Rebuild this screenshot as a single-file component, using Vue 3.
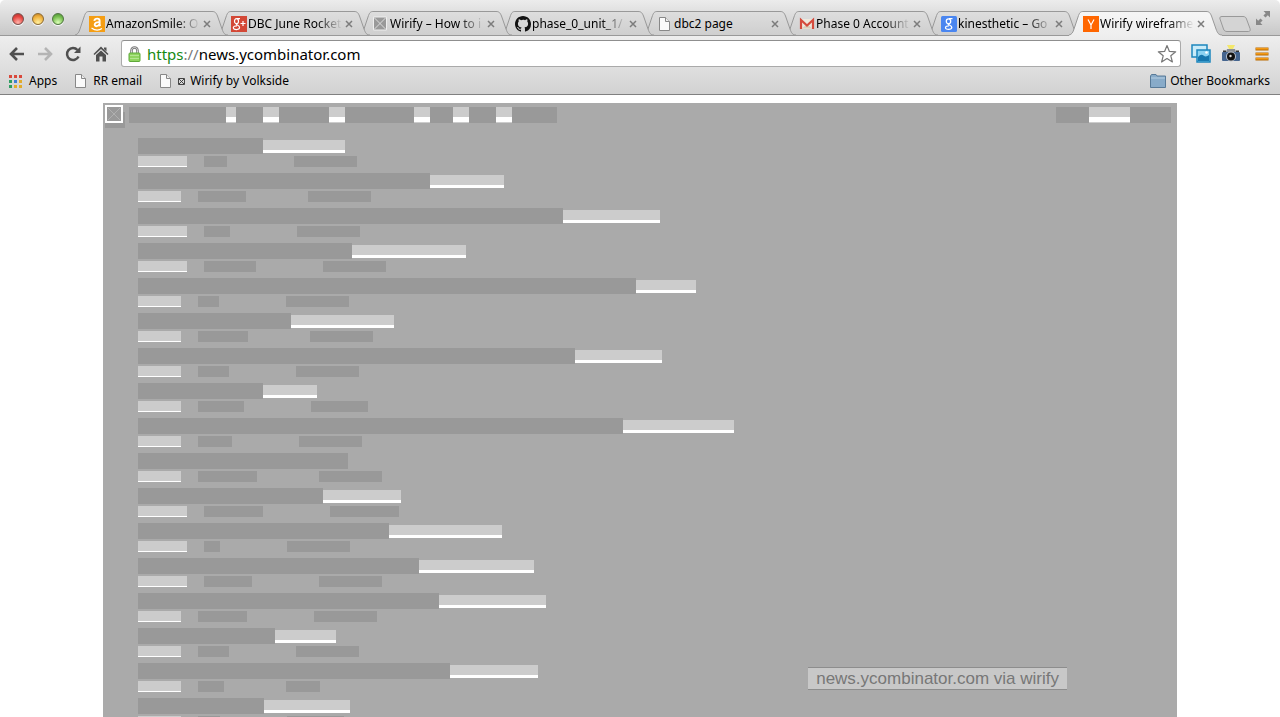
<script setup>
import { ref } from 'vue'

const address = ref('https://news.ycombinator.com')

const tabs = [
  { icon: 'amazon', title: 'AmazonSmile: O' },
  { icon: 'gplus', title: 'DBC June Rocket' },
  { icon: 'wirify', title: 'Wirify – How to i' },
  { icon: 'github', title: 'phase_0_unit_1/' },
  { icon: 'page', title: 'dbc2 page', whole: true },
  { icon: 'gmail', title: 'Phase 0 Account' },
  { icon: 'google', title: 'kinesthetic – Go' },
  { icon: 'yc', title: 'Wirify wireframe', active: true },
]

const appColors = ['#d9483b', '#d9483b', '#d9483b', '#2f9e62', '#3f7fd6', '#e2ab2b', '#2f9e62', '#e2ab2b', '#e2ab2b']

// Alternating text and link widths of the top menu
const menu = [97, 10, 27, 16, 50, 16, 69, 16, 23, 16, 27, 16, 45]
const account = [33, 41, 41]

// title, site, points, gap, age, gap, comments
const stories = [
  [125, 82, 49, 17, 23, 67, 63],
  [292, 74, 43, 17, 48, 62, 63],
  [425, 97, 49, 17, 26, 67, 63],
  [214, 114, 49, 17, 52, 67, 63],
  [498, 60, 43, 17, 21, 67, 63],
  [153, 103, 43, 17, 50, 62, 63],
  [437, 87, 43, 17, 31, 67, 63],
  [125, 54, 43, 17, 46, 67, 57],
  [485, 111, 43, 17, 34, 67, 63],
  [210, 0, 43, 17, 59, 62, 63],
  [185, 78, 49, 17, 59, 67, 69],
  [251, 113, 49, 17, 16, 67, 63],
  [281, 115, 49, 17, 48, 67, 63],
  [301, 107, 43, 17, 49, 67, 63],
  [137, 61, 43, 17, 31, 67, 63],
  [312, 88, 43, 17, 26, 62, 34],
  [126, 86, 43, 17, 22, 67, 57],
]

const px = (n) => ({ width: n + 'px' })
</script>

<template>
  <div class="browser">
    <header class="frame">
      <div class="strip">
        <div class="lights">
          <button class="light red" aria-label="Close window"></button>
          <button class="light amber" aria-label="Minimise window"></button>
          <button class="light green" aria-label="Zoom window"></button>
        </div>
        <nav class="tabs">
          <div v-for="(tab, i) in tabs" :key="i" class="tab" :class="{ active: tab.active }" :style="{ zIndex: tab.active ? 20 : 10 - i }">
            <svg class="shape" width="153" height="25" viewBox="0 0 153 25" aria-hidden="true">
              <defs>
                <linearGradient :id="'fill' + i" x1="0" y1="0" x2="0" y2="1">
                  <stop offset="0" :stop-color="tab.active ? '#f6f6f6' : '#dedede'" />
                  <stop offset="1" :stop-color="tab.active ? '#eeeeee' : '#cecece'" />
                </linearGradient>
              </defs>
              <path d="M0 24C3 23.500 4 21 5 18L9 6C10.500 1.500 11.500 .5 14 .5H137C140 .5 141 1.500 142.500 5L147 18C148.500 22 149.500 24 153 24V25H0Z" :fill="`url(#fill${i})`" />
              <path v-if="!tab.active" d="M0 24.500H153" stroke="#999" />
              <path d="M0 24C3 23.500 4 21 5 18L9 6C10.500 1.500 11.500 .5 14 .5H137C140 .5 141 1.500 142.500 5L147 18C148.500 22 149.500 24 153 24" fill="none" stroke="#999" />
            </svg>
            <a href="#" class="tablink">
              <svg v-if="tab.icon === 'amazon'" class="ico" viewBox="0 0 16 16">
                <rect width="16" height="16" fill="#f59e14" />
                <path d="M5.300 4.800C5.600 3 7 2.600 8.300 2.600 10 2.600 10.600 3.400 10.600 4.800V8.200C10.600 9.200 10.900 9.500 11.400 10M10.500 6.200C8 6 5.700 6.600 5.700 8.500 5.700 11 9.500 10.600 10.500 8" fill="none" stroke="#fff" stroke-width="1.900" />
                <path d="M2.500 12C6 14.500 10 14.500 13 12.500" fill="none" stroke="#fff" stroke-width="1.200" />
              </svg>
              <svg v-else-if="tab.icon === 'gplus'" class="ico" viewBox="0 0 16 16">
                <rect width="16" height="16" fill="#d34836" />
                <g fill="none" stroke="#fff" stroke-width="1.200">
                  <ellipse cx="5.500" cy="5.200" rx="2" ry="2.500" />
                  <path d="M6 2.600H9M6 7.700C3.500 8.500 8.800 9.300 8.600 11.600 8.500 14.200 2.300 14.200 2.300 11.800 2.300 10.500 4 9.700 6 9.800M9.500 7.500H14.500M12 5V10" />
                </g>
              </svg>
              <svg v-else-if="tab.icon === 'wirify'" class="ico" viewBox="0 0 16 16">
                <path d="M.5 1H13.500V14H.5Z" fill="#999" stroke="#eee" />
                <path d="M1 1.500 13 13.500M13 1.500 1 13.500" stroke="#ddd" />
              </svg>
              <svg v-else-if="tab.icon === 'github'" class="ico" viewBox="0 0 16 16">
                <path fill="#111" d="M8 0C3.580 0 0 3.580 0 8c0 3.540 2.290 6.530 5.470 7.590.4.070.55-.17.55-.38 0-.19-.01-.82-.01-1.490-2.010.37-2.530-.49-2.690-.94-.09-.23-.48-.94-.82-1.130-.28-.15-.68-.52-.01-.53.63-.01 1.080.58 1.230.82.72 1.210 1.870.87 2.330.66.07-.52.28-.87.51-1.070-1.780-.2-3.640-.89-3.640-3.950 0-.87.31-1.590.82-2.150-.08-.2-.36-1.020.08-2.120 0 0 .67-.21 2.200.82A7.600 7.600 0 0 1 8 3.860c.68 0 1.360.09 2 .27 1.530-1.040 2.200-.82 2.200-.82.44 1.100.16 1.920.08 2.120.51.56.82 1.270.82 2.150 0 3.070-1.870 3.750-3.650 3.950.29.25.54.73.54 1.480 0 1.070-.01 1.930-.01 2.200 0 .21.15.46.55.38A8 8 0 0 0 16 8c0-4.420-3.580-8-8-8Z" />
              </svg>
              <svg v-else-if="tab.icon === 'page'" class="ico" viewBox="0 0 16 16">
                <path d="M2.500 1.500H8.500L12.500 5.500V14.500H2.500Z" fill="#fafafa" stroke="#888" /><path d="M8.500 1.500V5.500H12.500" fill="#eee" stroke="#888" />
              </svg>
              <svg v-else-if="tab.icon === 'gmail'" class="ico" viewBox="0 0 16 16">
                <rect x="2" y="3" width="12" height="10" fill="#eee8dd" />
                <path d="M3 12.500 8 8 13 12.500" fill="#d8cdbb" />
                <path d="M2 13V4L8 9.500 14 4V13" fill="none" stroke="#d54b3d" stroke-width="2.200" />
              </svg>
              <svg v-else-if="tab.icon === 'google'" class="ico" viewBox="0 0 16 16">
                <rect width="16" height="16" rx="1.500" fill="#4a86f0" />
                <g fill="none" stroke="#fff" stroke-width="1.300">
                  <ellipse cx="7.500" cy="5.300" rx="2.200" ry="2.500" />
                  <path d="M8 2.700H11.500M8 7.800C5.500 8.500 11 9.300 10.800 11.500 10.600 14 4.500 14 4.500 11.700 4.500 10.400 6.200 9.800 8 9.900" />
                </g>
              </svg>
              <svg v-else class="ico" viewBox="0 0 16 16">
                <rect width="16" height="16" fill="#ff6600" />
                <path d="M5 3.500 8 9 11 3.500M8 8.500V13" fill="none" stroke="#fff" stroke-width="1.200" />
              </svg>
              <span class="title" :class="{ whole: tab.whole }">{{ tab.title }}</span>
            </a>
            <button class="close" aria-label="Close tab">
              <svg width="8" height="8" viewBox="0 0 8 8"><path d="M1 1 7 7M7 1 1 7" stroke="#7c7c7c" stroke-width="1.500" /></svg>
            </button>
          </div>
        </nav>
        <button class="newtab" aria-label="New tab">
          <svg width="32" height="16" viewBox="0 0 32 16"><path d="M3 .5H24C26 .5 27 1.500 27.500 3L31 12.500C31.500 14.500 31 15.500 29.500 15.500H8C6 15.500 5 14.500 4.500 13L1 3C.5 1.500 1 .5 3 .5Z" fill="#d4d4d4" stroke="#999" /></svg>
        </button>
        <button class="expand" aria-label="Full screen">
          <svg width="16" height="16" viewBox="0 0 16 16" fill="#888"><path d="M8.500 1H15V7.500L12.800 5.300 10.500 7.600 8.400 5.500 10.700 3.200ZM7.500 15H1V8.500L3.200 10.700 5.500 8.400 7.600 10.500 5.300 12.800Z" /></svg>
        </button>
      </div>
    </header>

    <div class="chrome">
      <div class="toolbar">
        <button class="nav" aria-label="Back"><svg width="16" height="16" viewBox="0 0 16 16"><path d="M8 2 2 8 8 14M2 8H15" fill="none" stroke="#505050" stroke-width="2.600" /></svg></button>
        <button class="nav" aria-label="Forward"><svg width="16" height="16" viewBox="0 0 16 16"><path d="M8 2 14 8 8 14M14 8H1" fill="none" stroke="#b4b4b4" stroke-width="2.600" /></svg></button>
        <button class="nav" aria-label="Reload"><svg width="16" height="16" viewBox="0 0 16 16"><path d="M12.500 4A6 6 0 1 0 13.500 10.500" fill="none" stroke="#505050" stroke-width="2.500" /><path d="M15.500 .5V7H9Z" fill="#505050" /></svg></button>
        <button class="nav" aria-label="Home"><svg width="16" height="16" viewBox="0 0 16 16" fill="#505050"><path d="M8 .5 15.500 8 14.500 9 8 3 1.500 9 .5 8ZM11 1.500H13.500V5.500L11 3ZM3 9 8 4.500 13 9V15.500H9.500V10.500H6.500V15.500H3Z" /></svg></button>
        <div class="omnibox">
          <svg class="lock" width="13" height="16" viewBox="0 0 13 16">
            <path d="M3.500 8V4.500C3.500 .5 9.500 .5 9.500 4.500V8" fill="none" stroke="#777" stroke-width="2.600" /><path d="M3.500 8V4.500C3.500 .5 9.500 .5 9.500 4.500V8" fill="none" stroke="#ddd" />
            <rect x="1" y="7" width="11" height="8.500" rx="1" fill="#8fd45f" stroke="#5fa83a" /><path d="M2 9.500H11M2 12.500H11" stroke="#b3e590" />
          </svg>
          <div class="field">
            <span class="urltext" aria-hidden="true"><span class="scheme">https</span><span class="slashes">://</span>news.ycombinator.com</span>
            <input v-model="address" class="url" aria-label="Address" spellcheck="false" />
          </div>
          <button class="star" aria-label="Bookmark this page"><svg width="20" height="20" viewBox="0 0 20 20"><path d="M10 1.500 12.400 7.400 18.700 7.800 13.800 11.800 15.400 18 10 14.600 4.600 18 6.200 11.800 1.300 7.800 7.600 7.400Z" fill="#fff" stroke="#777" stroke-width="1.200" stroke-linejoin="round" /></svg></button>
        </div>
        <button class="ext" aria-label="Image viewer"><svg width="20" height="20" viewBox="0 0 20 20">
          <rect x="1" y="1" width="15" height="12" fill="#c9ebf8" stroke="#1c86bd" stroke-width="1.500" />
          <rect x="6" y="6" width="13" height="12" fill="#8bd2f1" stroke="#1c86bd" stroke-width="1.500" />
          <path d="M7 13Q10 9.500 12.500 11.500T18 11V17H7Z" fill="#1677ae" /><circle cx="15.500" cy="8.500" r="1.300" fill="#fff" />
        </svg></button>
        <button class="ext" aria-label="Screen capture"><svg width="20" height="20" viewBox="0 0 20 20">
          <path d="M6 1H14L12 5H8Z" fill="#f4e86c" /><path d="M6 5H14L15 8H5Z" fill="#888d96" />
          <rect x="1" y="8" width="18" height="9" rx="1" fill="#45658f" /><path d="M2 8V6.500H5V8M15 8V6.500H18V8" fill="#333" />
          <circle cx="10" cy="12.500" r="5" fill="#b9bfc8" /><circle cx="10" cy="12.500" r="4" fill="#111" /><circle cx="9.500" cy="12" r="1.200" fill="#ddd" />
        </svg></button>
        <button class="ext menu" aria-label="Menu"><svg width="14" height="14" viewBox="0 0 14 14"><path d="M.5 2H13.500M.5 7H13.500M.5 12H13.500" stroke="#b96a00" stroke-width="3" /><path d="M1 1.700H13M1 6.700H13M1 11.700H13" stroke="#f39a16" stroke-width="1.400" /></svg></button>
      </div>

      <nav class="bookmarks">
        <a href="#" class="mark apps"><svg width="13" height="13" viewBox="0 0 13 13"><rect v-for="(c, i) in appColors" :key="i" :x="(i % 3) * 5" :y="Math.floor(i / 3) * 5" width="3" height="3" :fill="c" /></svg>Apps</a>
        <a href="#" class="mark"><svg width="11" height="14" viewBox="0 0 11 14"><path d="M.5 .5H6.500L10.500 4.500V13.500H.5Z" fill="#fafafa" stroke="#888" /><path d="M6.500 .5V4.500H10.500" fill="#eee" stroke="#888" /></svg>RR email</a>
        <a href="#" class="mark"><svg width="11" height="14" viewBox="0 0 11 14"><path d="M.5 .5H6.500L10.500 4.500V13.500H.5Z" fill="#fafafa" stroke="#888" /><path d="M6.500 .5V4.500H10.500" fill="#eee" stroke="#888" /></svg><svg class="box" width="7" height="7" viewBox="0 0 7 7"><path d="M.5 .5H6.500V6.500H.5ZM1 1 6 6M6 1 1 6" fill="none" stroke="#333" stroke-width=".9" /></svg>Wirify by Volkside</a>
        <a href="#" class="mark other"><svg width="16" height="14" viewBox="0 0 16 14"><path d="M.5 13.500V2L1.500 .5H6L7 2H15.500V13.500Z" fill="#88abc9" stroke="#587a98" /><path d="M1 4H15" stroke="#b7cfe3" /></svg>Other Bookmarks</a>
      </nav>
    </div>

    <main class="page">
      <div class="wire">
        <div class="masthead">
          <div class="logo"><svg width="18" height="18" viewBox="0 0 18 18"><rect x="1" y="1" width="16" height="16" fill="#999" stroke="#fff" stroke-width="2" /><path d="M3 3 15 15M15 3 3 15" stroke="#b0b0b0" /></svg></div>
          <div class="cells"><span v-for="(w, i) in menu" :key="i" :class="i % 2 ? 'hot' : 'cold'" :style="px(w)"></span></div>
          <div class="cells right"><span v-for="(w, i) in account" :key="i" :class="i % 2 ? 'hot' : 'cold'" :style="px(w)"></span></div>
        </div>
        <ul class="stories">
          <li v-for="(s, i) in stories" :key="i">
            <div class="line"><span class="headline" :style="px(s[0])"></span><span class="site" :style="px(s[1])"></span></div>
            <div class="line sub">
              <span class="points" :style="px(s[2])"></span><span :style="px(s[3])"></span><span class="meta" :style="px(s[4])"></span><span :style="px(s[5])"></span><span class="meta" :style="px(s[6])"></span>
            </div>
          </li>
        </ul>
      </div>
      <a href="#" class="credit">news.ycombinator.com via wirify</a>
    </main>
  </div>
</template>

<style>
body { background: #fff; }
</style>

<style scoped>
* { box-sizing: border-box; }
button { border: 0; padding: 0; background: none; display: flex; align-items: center; justify-content: center; flex: none; }
svg { display: block; flex: none; }
a { color: inherit; text-decoration: none; }
.browser { height: 100vh; display: flex; flex-direction: column; overflow: hidden; font-family: "Noto Sans", "Open Sans", sans-serif; font-size: 12px; color: #000; }
.frame { flex: none; background: linear-gradient(#ececec, #c8c8c8 35px, #999 35px); border-radius: 5px 5px 0 0; }
.strip { display: flex; height: 36px; align-items: flex-end; }
.lights { display: flex; gap: 8px; padding: 0 11px 11px 12px; }
.light { width: 12px; height: 12px; border-radius: 50%; border: 1px solid #76504c; box-shadow: 0 1px 1px #fff; }
.red { background: radial-gradient(circle at 50% 85%, #ffb4ac, #e64540 60%, #a93632); }
.amber { background: radial-gradient(circle at 50% 85%, #fff0a0, #efb13c 60%, #b97925); border-color: #8a6a34; }
.green { background: radial-gradient(circle at 50% 85%, #dcffb8, #75bd4e 60%, #4b8a34); border-color: #4f7440; }
.tabs { display: flex; position: relative; z-index: 1; }
.tab { position: relative; flex: 0 0 142px; height: 25px; display: flex; align-items: center; padding-left: 14px; }
.shape { position: absolute; left: 0; top: 0; }
.tablink { position: relative; display: flex; align-items: center; gap: 1px; width: 113px; }
.ico { width: 16px; height: 16px; }
.title { flex: 1; overflow: hidden; white-space: nowrap; line-height: 16px; mask-image: linear-gradient(to right, #000 72%, transparent 98%); }
.title.whole { mask-image: none; }
.close { position: relative; margin-left: 1px; width: 8px; height: 16px; }
.newtab { margin: 0 0 4px 8px; }
.expand { margin: 0 9px 10px auto; }
.chrome { flex: none; background: linear-gradient(#eeeeee, #d2d2d2); border-bottom: 1px solid #808080; padding: 4px 10px 4px 9px; }
.toolbar { display: flex; align-items: center; height: 27px; }
.nav { width: 16px; margin-right: 12px; height: 24px; }
.omnibox { flex: 1; display: flex; align-items: center; height: 27px; background: #fff; border: 1px solid #aaa; border-top-color: #8f8f8f; border-radius: 3px; padding: 0 3px 0 6px; margin-right: 10px; }
.field { flex: 1; display: grid; margin-left: 6px; font-size: 15px; line-height: 24px; }
.urltext, .url { grid-area: 1 / 1; }
.urltext { pointer-events: none; }
.scheme { color: #168a12; }
.slashes { color: #777; }
.url { border: 0; outline: 0; padding: 0; width: 100%; background: none; font: inherit; color: transparent; caret-color: #000; }
.ext { width: 20px; margin-right: 10px; }
.menu { width: 14px; margin: 0 1px 0 4px; }
.bookmarks { display: flex; align-items: center; height: 23px; padding-top: 5px; }
.mark { display: flex; align-items: center; gap: 7px; margin-right: 18px; line-height: 16px; }
.box { margin-right: -2px; }
.other { margin: 0 0 0 auto; gap: 4px; }
.page { flex: 1; min-height: 0; overflow: hidden; background: #fff; padding: 8px; position: relative; }
.wire { width: 85%; margin: 0 auto; min-height: 100%; background: #aaa; }
.masthead { display: flex; padding: 2px 6px 0 2px; height: 35px; align-items: flex-start; }
.logo { width: 20px; height: 23px; background: linear-gradient(transparent 7px, #999 7px); margin-right: 4px; }
.cells { display: flex; height: 16px; margin-top: 2px; }
.right { margin-left: auto; }
.cold, .headline, .meta { background: #999; }
.hot { background: linear-gradient(#ccc 10px, #fff 10px, #fff 15px, #ccc 15px); }
.stories { list-style: none; margin: 0; padding: 0 0 0 35px; }
.stories li { height: 35px; }
.line { display: flex; height: 16px; }
.site { height: 13px; margin-top: 2px; background: #ccc; border-bottom: 3px solid #fff; }
.sub { margin-top: 2px; height: 11px; }
.points { background: #ccc; border-bottom: 1px solid #fff; }
.credit { position: absolute; right: 213px; bottom: 27px; padding: 0 8px; background: #c8c8c8; border: solid #8d8d8d; border-width: 1px 0; color: #777; font: 17px/21px "Liberation Sans", Arial, sans-serif; }
</style>
